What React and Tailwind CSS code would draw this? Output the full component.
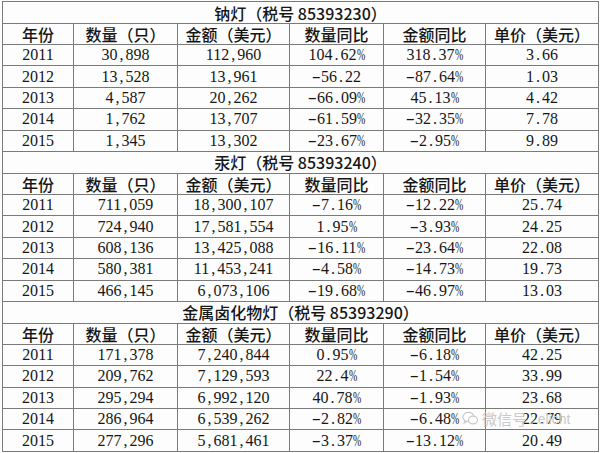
const tables = [
  {
    title: '钠灯（税号 85393230）',
    rows: [
      ['2011', '30,898', '112,960', '104.62%', '318.37%', '3.66'],
      ['2012', '13,528', '13,961', '-56.22', '-87.64%', '1.03'],
      ['2013', '4,587', '20,262', '-66.09%', '45.13%', '4.42'],
      ['2014', '1,762', '13,707', '-61.59%', '-32.35%', '7.78'],
      ['2015', '1,345', '13,302', '-23.67%', '-2.95%', '9.89'],
    ],
  },
  {
    title: '汞灯（税号 85393240）',
    rows: [
      ['2011', '711,059', '18,300,107', '-7.16%', '-12.22%', '25.74'],
      ['2012', '724,940', '17,581,554', '1.95%', '-3.93%', '24.25'],
      ['2013', '608,136', '13,425,088', '-16.11%', '-23.64%', '22.08'],
      ['2014', '580,381', '11,453,241', '-4.58%', '-14.73%', '19.73'],
      ['2015', '466,145', '6,073,106', '-19.68%', '-46.97%', '13.03'],
    ],
  },
  {
    title: '金属卤化物灯（税号 85393290）',
    rows: [
      ['2011', '171,378', '7,240,844', '0.95%', '-6.18%', '42.25'],
      ['2012', '209,762', '7,129,593', '22.4%', '-1.54%', '33.99'],
      ['2013', '295,294', '6,992,120', '40.78%', '-1.93%', '23.68'],
      ['2014', '286,964', '6,539,262', '-2.82%', '-6.48%', '22.79'],
      ['2015', '277,296', '5,681,461', '-3.37%', '-13.12%', '20.49'],
    ],
  },
];

const headers = ['年份', '数量（只）', '金额（美元）', '数量同比', '金额同比', '单价（美元）'];

// mimic the wide half-width punctuation of the source font
function Num({ v }) {
  return v.split('').map((c, i) => {
    if (c === ',' || c === '.') {
      return (
        <span key={i} className="inline-block w-[0.5em]">
          {c}
        </span>
      );
    }
    if (c === '-') {
      return (
        <span key={i} className="inline-block w-[0.55em] text-center scale-x-[1.7]">
          {c}
        </span>
      );
    }
    if (c === '%') {
      return (
        <span key={i} className="inline-block w-[0.5em] origin-left scale-x-[0.62]">
          {c}
        </span>
      );
    }
    return c;
  });
}

const cell = 'border border-[#7a7a7a] p-0 text-center align-middle';

export default function App() {
  return (
    <div className="relative w-[600px] h-[453px] bg-[#fdfdfd] pl-[2px] pt-[1px] overflow-hidden">
      <table className="table-fixed border-collapse w-[596px] text-[#161616]">
        <colgroup>
          <col className="w-[71px]" />
          <col className="w-[104px]" />
          <col className="w-[112px]" />
          <col className="w-[94px]" />
          <col className="w-[102px]" />
          <col className="w-[113px]" />
        </colgroup>
        <tbody>
          {tables.map((t) => (
            <Section key={t.title} t={t} />
          ))}
        </tbody>
      </table>

      {/* watermark laid over the last rows */}
      <div className="absolute left-[462px] top-[411px] flex items-center gap-[3px] text-[#cacaca] text-[15px] leading-none font-['Noto_Sans_CJK_SC',sans-serif] pointer-events-none">
        <svg width="17" height="15" viewBox="0 0 17 15" fill="none" stroke="#cacaca" strokeWidth="1.2">
          <ellipse cx="6.5" cy="6" rx="5.5" ry="4.6" />
          <path d="M3 9.6 L2.2 12 L5 10.5" />
          <ellipse cx="11" cy="9" rx="4.5" ry="3.8" fill="#fdfdfd" />
        </svg>
        <span>微信号</span>
        <span className="font-['Liberation_Sans',sans-serif] text-[14px]">: elicht</span>
      </div>
    </div>
  );
}

function Section({ t }) {
  return (
    <>
      <tr className="h-[22px]">
        <td colSpan={6} className={`${cell} text-[16px] leading-none font-medium font-['Noto_Sans_CJK_SC',sans-serif]`}>
          {t.title}
        </td>
      </tr>
      <tr className="h-[21px]">
        {headers.map((h) => (
          <td key={h} className={`${cell} text-[16px] leading-none font-medium font-['Noto_Sans_CJK_SC',sans-serif]`}>
            {h}
          </td>
        ))}
      </tr>
      {t.rows.map((r) => (
        <tr key={r[0]} className="h-[21.4px]">
          {r.map((v, i) => (
            <td key={i} className={`${cell} text-[16px] leading-none font-['Liberation_Serif',serif] whitespace-nowrap`}>
              <Num v={v} />
            </td>
          ))}
        </tr>
      ))}
    </>
  );
}
